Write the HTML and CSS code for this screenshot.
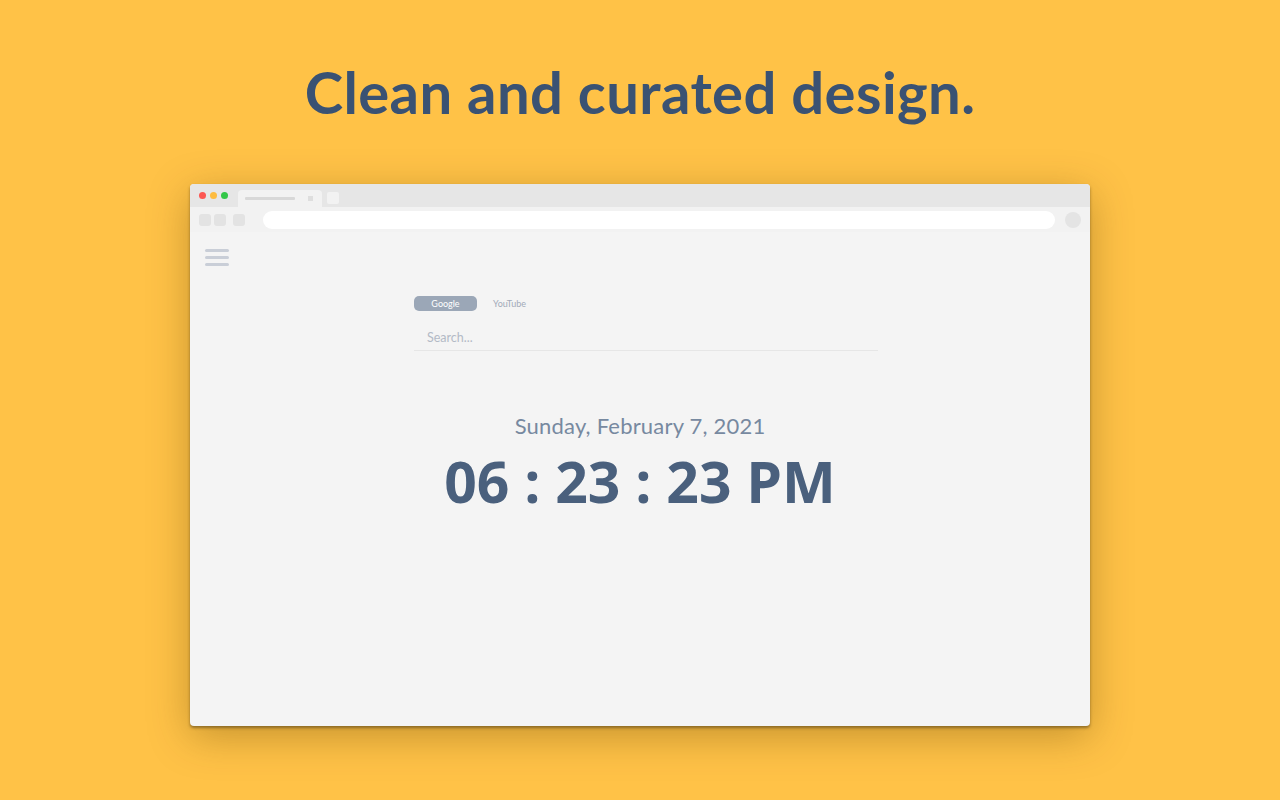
FILE: index.html
```html
<!DOCTYPE html>
<html>
<head>
<meta charset="utf-8">
<link rel="stylesheet" href="styles.css">
</head>
<body>
<div class="page">
  <h1 class="headline">Clean and curated design.</h1>
  <div class="window">
    <div class="tabbar">
      <div class="lights">
        <span class="light red"></span>
        <span class="light yellow"></span>
        <span class="light green"></span>
      </div>
      <div class="tab">
        <span class="tab-title"></span>
        <span class="tab-close"></span>
      </div>
      <span class="newtab"></span>
    </div>
    <div class="toolbar">
      <span class="btn"></span>
      <span class="btn"></span>
      <span class="btn btn-gap"></span>
      <div class="address"></div>
      <span class="avatar"></span>
    </div>
    <div class="content">
      <div class="menu">
        <span></span><span></span><span></span>
      </div>
      <div class="search-area">
        <div class="engines">
          <span class="engine active">Google</span>
          <span class="engine">YouTube</span>
        </div>
        <div class="search">Search...</div>
      </div>
      <div class="date">Sunday, February 7, 2021</div>
      <div class="time">06 : 23 : 23 PM</div>
    </div>
  </div>
</div>
</body>
</html>
```
FILE: styles.css
```css
* { box-sizing: border-box; }
html, body { margin: 0; padding: 0; }
body {
  width: 1280px;
  height: 800px;
  background: #ffc247;
  overflow: hidden;
  font-family: "Lato", "Open Sans", sans-serif;
}
.page {
  display: flex;
  flex-direction: column;
  align-items: center;
}
.headline {
  margin: 58px 0 0;
  height: 126px;
  font-family: "Lato", sans-serif;
  font-weight: 700;
  font-size: 58px;
  line-height: 68px;
  color: #3a5273;
  letter-spacing: 0.4px;
}
.window {
  width: 900px;
  height: 542px;
  background: #f4f4f4;
  border-radius: 4px;
  overflow: hidden;
  box-shadow: 0 2px 3px rgba(80, 60, 20, 0.55), 0 10px 40px rgba(90, 60, 0, 0.35);
  display: flex;
  flex-direction: column;
}
.tabbar {
  height: 23px;
  background: #e6e6e6;
  display: flex;
  align-items: flex-end;
  padding-left: 9px;
}
.lights {
  display: flex;
  gap: 4px;
  align-self: center;
  margin-right: 10px;
}
.light { width: 7px; height: 7px; border-radius: 50%; }
.red { background: #fc5753; }
.yellow { background: #fdbc40; }
.green { background: #33c748; }
.tab {
  width: 84px;
  height: 17px;
  background: #f2f2f2;
  border-radius: 4px 4px 0 0;
  display: flex;
  align-items: center;
  padding: 0 7px;
}
.tab-title { width: 50px; height: 3px; background: #d8d8d8; border-radius: 1px; }
.tab-close { width: 5px; height: 5px; background: #dedede; margin-left: auto; margin-right: 2px; }
.newtab {
  width: 12px; height: 12px; background: #f2f2f2; border-radius: 2px;
  margin-left: 5px; align-self: center; margin-top: 4px;
}
.toolbar {
  height: 25px;
  background: #f2f2f2;
  display: flex;
  align-items: center;
  padding: 0 9px;
}
.btn { width: 12px; height: 12px; background: #e3e3e3; border-radius: 3px; margin-right: 3px; }
.btn-gap { margin-left: 4px; margin-right: 18px; }
.address { flex: 1; height: 18px; background: #ffffff; border-radius: 9px; }
.avatar { width: 16px; height: 16px; background: #e4e4e4; border-radius: 50%; margin-left: 10px; }
.content {
  flex: 1;
  position: relative;
  display: flex;
  flex-direction: column;
  align-items: center;
}
.menu {
  position: absolute;
  left: 15px;
  top: 17px;
  display: flex;
  flex-direction: column;
  gap: 4px;
}
.menu span { width: 24px; height: 3px; background: #c9ced7; border-radius: 2px; }
.search-area {
  width: 464px;
  margin-top: 64px;
  margin-left: 12px;
}
.engines { display: flex; align-items: center; gap: 16px; }
.engine {
  font-family: "Lato", sans-serif;
  font-size: 9px;
  color: #a2aab8;
  height: 15px;
  line-height: 15px;
}
.engine.active {
  width: 63px;
  text-align: center;
  background: #9ba7b7;
  color: #ffffff;
  border-radius: 5px;
}
.search {
  margin-top: 12px;
  padding: 0 13px;
  height: 28px;
  line-height: 30px;
  font-family: "Lato", sans-serif;
  font-size: 12.5px;
  color: #b3bac6;
  border-bottom: 1.5px solid #e6e6e6;
}
.date {
  margin-top: 62px;
  font-family: "Lato", sans-serif;
  font-weight: 400;
  font-size: 22px;
  line-height: 26px;
  color: #7789a0;
  letter-spacing: 0.2px;
}
.time {
  margin-top: 7px;
  font-family: "Open Sans", sans-serif;
  font-weight: 700;
  font-size: 57px;
  line-height: 70px;
  color: #4a607d;
}
```
